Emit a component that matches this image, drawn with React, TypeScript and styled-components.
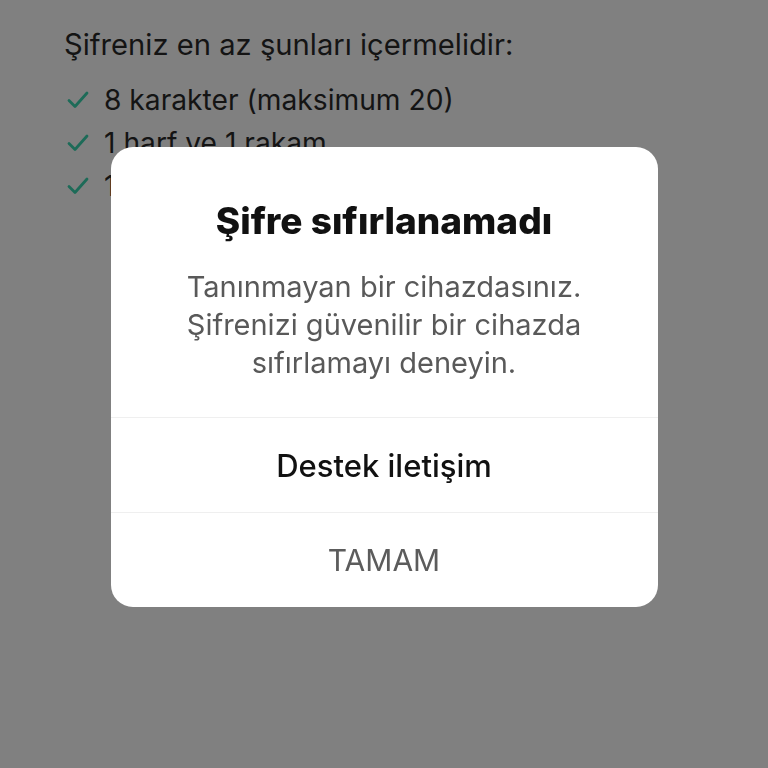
import React from "react";
import styled, { createGlobalStyle } from "styled-components";

const Global = createGlobalStyle`
  html, body { margin: 0; padding: 0; background: #808080; }
  body { font-family: Inter, "Noto Sans", sans-serif; }
`;

const Page = styled.div`
  min-height: 768px;
  background: #808080;
  padding: 28px 0 0 64px;
  box-sizing: border-box;
`;

const Heading = styled.div`
  font-size: 29.2px;
  color: #141414;
  line-height: 34px;
  margin-bottom: 21px;
`;

const List = styled.div`
  display: flex;
  flex-direction: column;
  gap: 9px;
`;

const Item = styled.div`
  display: flex;
  align-items: center;
  gap: 14px;
  font-size: 28.2px;
  line-height: 34px;
  color: #141414;
`;

const Check = styled.svg`
  width: 24px;
  height: 24px;
  flex: none;
  margin-left: 2px;
`;

const Overlay = styled.div`
  position: fixed;
  inset: 0;
  display: flex;
  align-items: center;
  justify-content: center;
  padding-bottom: 14px;
`;

const Dialog = styled.div`
  width: 547px;
  background: #ffffff;
  border-radius: 22px;
  display: flex;
  flex-direction: column;
  overflow: hidden;
`;

const Body = styled.div`
  padding: 52px 30px 35px;
  display: flex;
  flex-direction: column;
  align-items: center;
  text-align: center;
`;

const Title = styled.div`
  font-size: 37px;
  font-weight: 800;
  color: #111;
  line-height: 44px;
  margin-bottom: 25px;
`;

const Message = styled.div`
  font-size: 29px;
  line-height: 38px;
  color: #595959;
`;

const Action = styled.div<{ $primary?: boolean }>`
  height: 94px;
  border-top: 1px solid #efefef;
  display: flex;
  align-items: center;
  justify-content: center;
  font-size: ${(p) => (p.$primary ? 31 : 30)}px;
  font-weight: ${(p) => (p.$primary ? 500 : 400)};
  color: ${(p) => (p.$primary ? "#111" : "#5c5c5c")};
`;

const CheckIcon = () => (
  <Check viewBox="0 0 24 24" fill="none">
    <path d="M3 12.5l6 6L21 5" stroke="#1d6b58" strokeWidth="2.8" strokeLinecap="round" strokeLinejoin="round" />
  </Check>
);

export default function App() {
  return (
    <>
      <Global />
      <Page>
        <Heading>Şifreniz en az şunları içermelidir:</Heading>
        <List>
          <Item><CheckIcon />8 karakter (maksimum 20)</Item>
          <Item><CheckIcon />1 harf ve 1 rakam</Item>
          <Item><CheckIcon />1 özel karakter (# ? ! & gibi)</Item>
        </List>
      </Page>
      <Overlay>
        <Dialog>
          <Body>
            <Title>Şifre sıfırlanamadı</Title>
            <Message>
              Tanınmayan bir cihazdasınız.
              <br />
              Şifrenizi güvenilir bir cihazda
              <br />
              sıfırlamayı deneyin.
            </Message>
          </Body>
          <Action $primary>Destek iletişim</Action>
          <Action>TAMAM</Action>
        </Dialog>
      </Overlay>
    </>
  );
}
